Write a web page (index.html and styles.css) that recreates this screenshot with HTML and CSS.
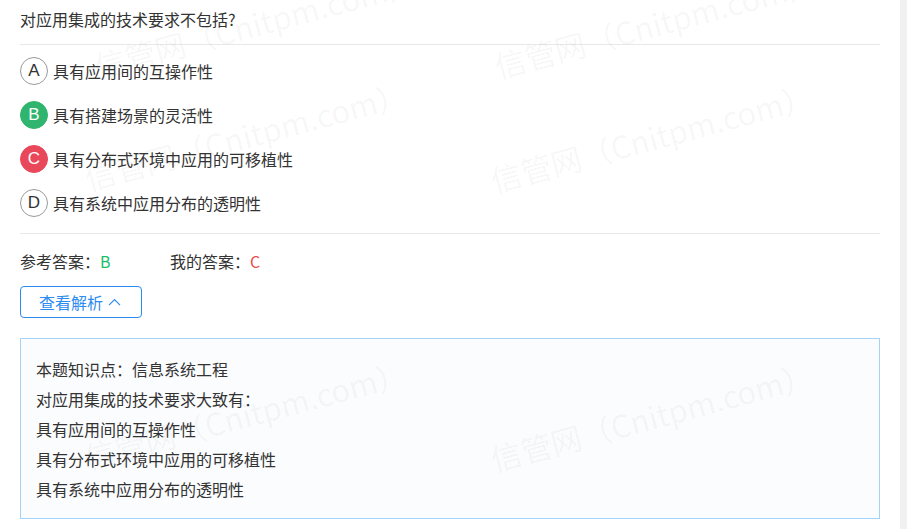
FILE: index.html
```html
<!DOCTYPE html>
<html lang="zh-CN">
<head>
    <meta charset="UTF-8">
    <meta name="viewport" content="width=device-width, initial-scale=1.0">
    <title>试题解析</title>
    <link rel="stylesheet" href="styles.css">
</head>
<body>
    <div class="layout">
        <main class="page">
            <div class="question">对应用集成的技术要求不包括?</div>

            <ul class="options">
                <li class="option"><span class="option-mark">A</span>具有应用间的互操作性</li>
                <li class="option"><span class="option-mark correct">B</span>具有搭建场景的灵活性</li>
                <li class="option"><span class="option-mark wrong">C</span>具有分布式环境中应用的可移植性</li>
                <li class="option"><span class="option-mark">D</span>具有系统中应用分布的透明性</li>
            </ul>

            <div class="answers">
                <span class="answer">参考答案：<em class="ok">B</em></span>
                <span class="answer">我的答案：<em class="bad">C</em></span>
            </div>

            <button type="button" class="toggle">查看解析
                <svg width="13" height="8" viewBox="0 0 13 8"><path d="M1 7.2 L6.5 1.5 L12 7.2" fill="none" stroke="currentColor" stroke-width="1.2"/></svg>
            </button>

            <div class="analysis">
                <p>本题知识点：信息系统工程</p>
                <p>对应用集成的技术要求大致有：</p>
                <p>具有应用间的互操作性</p>
                <p>具有分布式环境中应用的可移植性</p>
                <p>具有系统中应用分布的透明性</p>
            </div>

            <!-- watermark layer -->
            <span class="wm" style="left:99px;top:50px">信管网（Cnitpm.com）</span>
            <span class="wm" style="left:499px;top:50px">信管网（Cnitpm.com）</span>
            <span class="wm" style="left:89px;top:162px">信管网（Cnitpm.com）</span>
            <span class="wm" style="left:495px;top:164px">信管网（Cnitpm.com）</span>
            <span class="wm" style="left:89px;top:441px">信管网（Cnitpm.com）</span>
            <span class="wm" style="left:495px;top:443px">信管网（Cnitpm.com）</span>
        </main>
        <div class="rail"></div>
    </div>
</body>
</html>
```

FILE: styles.css
```css
* {
    box-sizing: border-box;
}
html, body {
    margin: 0;
    height: 100%;
}
body {
    font-family: "Noto Sans CJK SC", "Noto Sans", sans-serif;
    font-size: 16px;
    color: #333;
    background: #fff;
    overflow: hidden;
}
.layout {
    display: flex;
    height: 100%;
}
.page {
    position: relative;
    width: 900px;
    padding: 0 20px;
    overflow: hidden;
}
.rail {
    flex: 1;
    background: #f1f1f1;
}
.question {
    line-height: 24px;
    padding: 7px 0 13px;
    border-bottom: 1px solid #e8e8e8;
}
.options {
    list-style: none;
    margin: 0;
    padding: 12px 0 16px;
    display: flex;
    flex-direction: column;
    gap: 16px;
    border-bottom: 1px solid #e8e8e8;
}
.option {
    display: flex;
    align-items: center;
    height: 28px;
    line-height: 28px;
}
.option-mark {
    width: 28px;
    height: 28px;
    margin-right: 5px;
    border: 1px solid #9a9a9a;
    border-radius: 50%;
    display: flex;
    align-items: center;
    justify-content: center;
    font-family: "Liberation Sans", sans-serif;
    font-size: 17px;
    color: #333;
}
.option-mark.correct {
    background: #2fb56e;
    border-color: #2fb56e;
    color: #fff;
}
.option-mark.wrong {
    background: #e9475a;
    border-color: #e9475a;
    color: #fff;
}
.answers {
    display: flex;
    align-items: center;
    height: 24px;
    margin-top: 15px;
    line-height: 24px;
}
.answer {
    width: 150px;
}
.answer em {
    font-style: normal;
}
.ok {
    color: #19be6b;
}
.bad {
    color: #ed4a4a;
}
.toggle {
    display: flex;
    align-items: center;
    gap: 5px;
    margin-top: 13px;
    width: 122px;
    height: 32px;
    padding: 0 0 0 18px;
    background: #fff;
    border: 1px solid #2d8cf0;
    border-radius: 4px;
    color: #2d8cf0;
    font-family: inherit;
    font-size: 16px;
    cursor: pointer;
}
.analysis {
    margin-top: 20px;
    padding: 15px 15px 14px;
    border: 1px solid #a3d3f8;
    background: #fbfcfe;
}
.analysis p {
    margin: 0;
    line-height: 30px;
}
.wm {
    position: absolute;
    font-size: 31px;
    line-height: 31px;
    white-space: nowrap;
    color: rgba(0, 0, 0, 0.045);
    transform: rotate(-15deg);
    transform-origin: 0 100%;
    pointer-events: none;
}
```
